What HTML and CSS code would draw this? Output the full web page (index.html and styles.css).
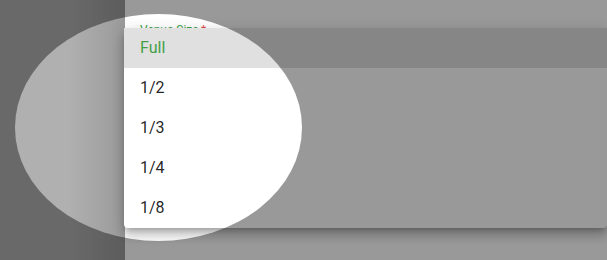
FILE: index.html
```html
<!DOCTYPE html>
<html lang="en">
<head>
    <meta charset="UTF-8">
    <title>Venue Size</title>
    <link rel="stylesheet" href="styles.css">
</head>
<body>
    <div class="page">
        <div class="side"></div>
        <div class="main">
            <label class="field-label">Venue Size<span class="req">&thinsp;*</span></label>
        </div>
    </div>

    <ul class="menu">
        <li class="menu-item selected">Full</li>
        <li class="menu-item">1/2</li>
        <li class="menu-item">1/3</li>
        <li class="menu-item">1/4</li>
        <li class="menu-item">1/8</li>
    </ul>

    <div class="spotlight"></div>
</body>
</html>
```

FILE: styles.css
```css
html, body {
    margin: 0;
    height: 100%;
    overflow: hidden;
}
body {
    font-family: Roboto, 'Noto Sans', sans-serif;
    background-color: #fff;
}
.page {
    display: flex;
    height: 100%;
}
.side {
    width: 125px;
    background: linear-gradient(to right, #b0b0b0 0%, #b0b0b0 55%, #9a9a9a 100%);
}
.main {
    flex: 1;
    background-color: #fff;
    padding: 23px 15px 0;
}
.field-label {
    display: block;
    font-size: 12px;
    line-height: 14px;
    color: #43a047;
}
.req {
    color: #e53935;
}
.menu {
    position: absolute;
    left: 124px;
    right: 0;
    top: 28px;
    margin: 0;
    padding: 0;
    list-style: none;
    background-color: #fff;
    border-radius: 4px;
    box-shadow: 0 5px 5px -3px rgba(0,0,0,.2), 0 8px 10px 1px rgba(0,0,0,.14), 0 3px 14px 2px rgba(0,0,0,.12);
}
.menu-item {
    height: 40px;
    line-height: 40px;
    padding-left: 16px;
    font-size: 16px;
    color: rgba(0,0,0,.87);
}
.menu-item.selected {
    background-color: #e0e0e0;
    color: #43a047;
}
.spotlight {
    position: absolute;
    left: 15px;
    top: 14px;
    width: 287px;
    height: 227px;
    border-radius: 50%;
    box-shadow: 0 0 0 2000px rgba(0,0,0,.4);
}
```
